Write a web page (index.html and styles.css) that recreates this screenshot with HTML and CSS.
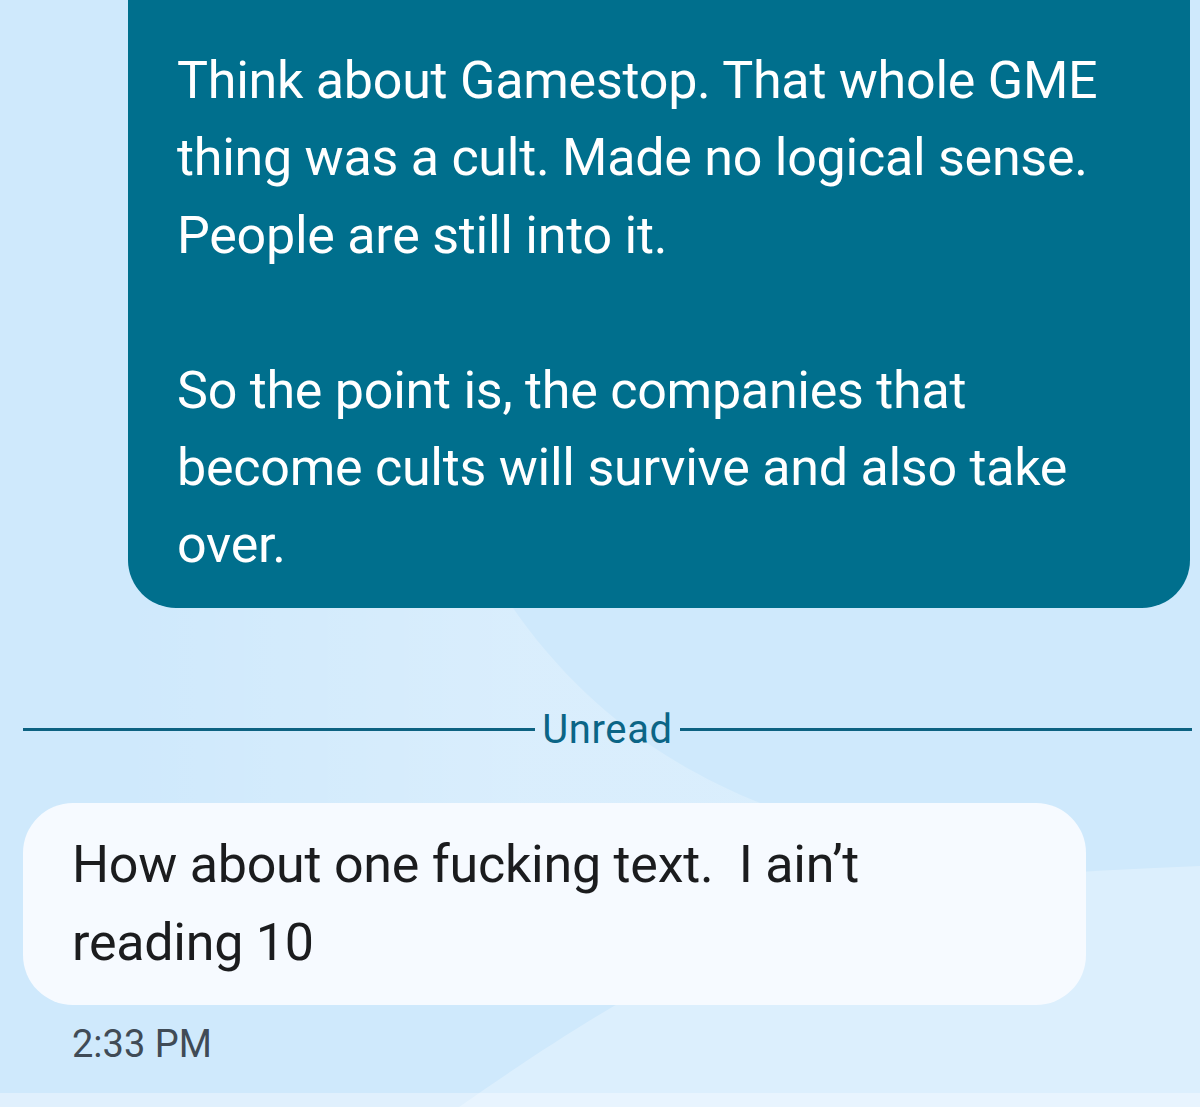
FILE: index.html
```html
<!DOCTYPE html>
<html lang="en">
<head>
<meta charset="utf-8">
<title>Messages</title>
<link rel="stylesheet" href="styles.css">
</head>
<body>
<div class="screen">
  <svg class="backdrop" width="1200" height="1107" viewBox="0 0 1200 1107" aria-hidden="true">
    <defs>
      <linearGradient id="fade" x1="520" y1="0" x2="120" y2="0" gradientUnits="userSpaceOnUse">
        <stop offset="0" stop-color="#ffffff" stop-opacity="0.22"/>
        <stop offset="1" stop-color="#ffffff" stop-opacity="0"/>
      </linearGradient>
    </defs>
    <path d="M0 608 L513 608 C570 690 650 760 765 805 L0 805 Z" fill="url(#fade)"/>
    <path d="M1200 866 C1100 870 1000 876 900 885 C760 920 640 980 459 1107 L1200 1107 Z" fill="#ffffff" opacity="0.28"/>
    <rect x="0" y="1093" width="1200" height="14" fill="#ffffff" opacity="0.35"/>
  </svg>
  <main class="thread">
    <div class="bubble bubble-out">Think about Gamestop. That whole GME thing was a cult. Made no logical sense. People are still into it.<br><br>So the point is, the companies that become cults will survive and also take over.</div>
    <div class="divider">
      <span class="divider-line"></span>
      <span class="divider-label">Unread</span>
      <span class="divider-line"></span>
    </div>
    <div class="bubble bubble-in">How about one fucking text.&nbsp; I ain’t reading 10</div>
    <div class="timestamp">2:33 PM</div>
  </main>
</div>
</body>
</html>
```

FILE: styles.css
```css
html, body {
  margin: 0;
  padding: 0;
}

body {
  background: #cfe9fc;
  width: 1200px;
  height: 1107px;
  overflow: hidden;
}

.screen {
  position: relative;
  width: 1200px;
  height: 1107px;
  overflow: hidden;
  background: #cfe9fc;
}

.backdrop {
  position: absolute;
  left: 0;
  top: 0;
  z-index: 0;
}

.thread {
  position: relative;
  z-index: 1;
  display: flex;
  flex-direction: column;
}

.bubble {
  font-family: Roboto, "Noto Sans", sans-serif;
  font-size: 52px;
  letter-spacing: -0.25px;
  box-sizing: border-box;
}

.bubble-out {
  margin: 0 10px 0 128px;
  padding: 42px 49px 24px 49px;
  line-height: 77.4px;
  background: #006f8d;
  color: #ffffff;
  border-radius: 0 0 48px 48px;
}

.divider {
  margin-top: 98px;
  height: 48px;
  padding: 0 8px 0 23px;
  display: flex;
  align-items: center;
  gap: 7px;
}

.divider-line {
  flex: 1;
  height: 3px;
  background: #0d6281;
}

.divider-label {
  font-family: Roboto, sans-serif;
  font-size: 40px;
  letter-spacing: 0.6px;
  line-height: 48px;
  color: #0b6586;
}

.bubble-in {
  margin: 49px 0 0 23px;
  width: 1063px;
  padding: 23px 49px 22px 49px;
  line-height: 78.4px;
  background: #f6faff;
  color: #1b1c1e;
  border-radius: 50px;
}

.timestamp {
  margin-top: 16px;
  padding-left: 72px;
  font-family: Roboto, sans-serif;
  font-size: 38px;
  line-height: 46px;
  color: #404b56;
}
```
